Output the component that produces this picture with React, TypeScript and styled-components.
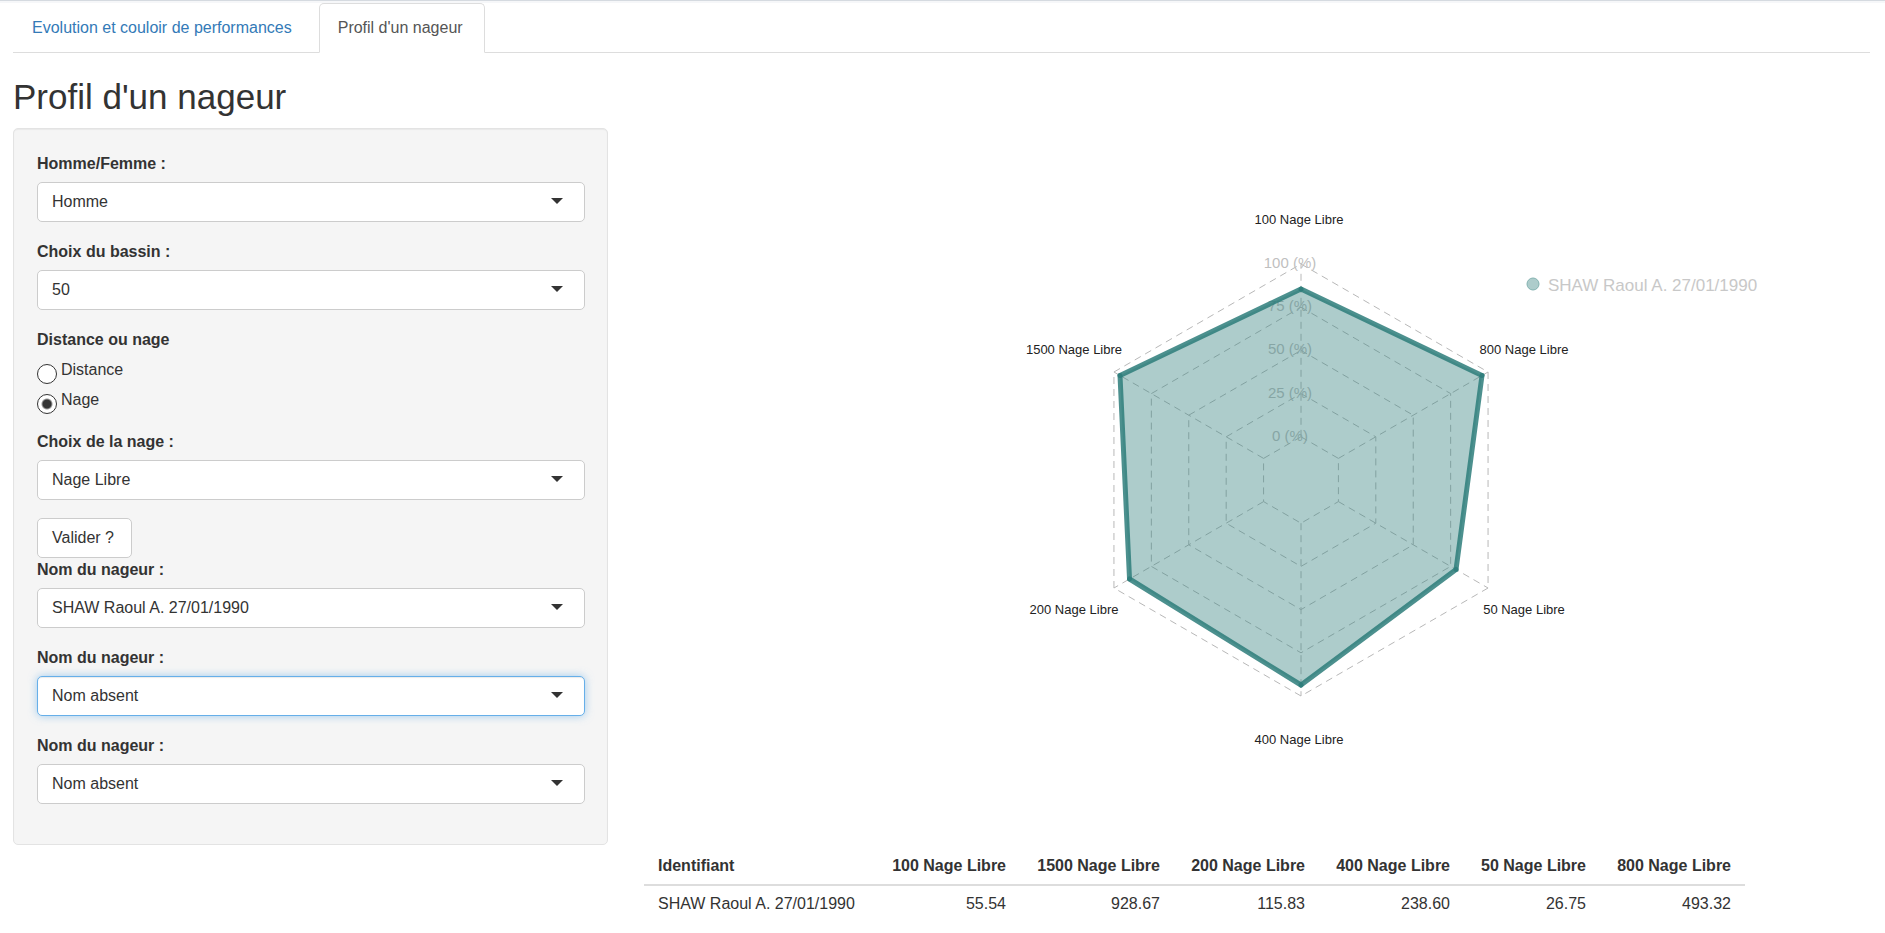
import React, { useState } from 'react';
import styled, { createGlobalStyle, css } from 'styled-components';

const GlobalStyle = createGlobalStyle`
  *, *::before, *::after { box-sizing: border-box; }
  body {
    margin: 0;
    background: #fff;
    color: #333;
    font-family: "Liberation Sans", Arial, Helvetica, sans-serif;
    font-size: 16px;
    line-height: 24px;
  }
`;

const Page = styled.div`
  border-top: 1px solid #d5dae0;
  box-shadow: inset 0 2px #f6f7f9;
  padding: 2px 15px 16px 13px;
`;

const Tabs = styled.nav`
  display: flex;
  gap: 5px;
  border-bottom: 1px solid #ddd;
`;

const Tab = styled.a<{ $active?: boolean }>`
  margin-bottom: -1px;
  padding: 12px 21px 12px 18px;
  border: 1px solid transparent;
  border-radius: 5px 5px 0 0;
  color: #337ab7;
  text-decoration: none;
  ${({ $active }) =>
    $active &&
    css`
      background: #fff;
      border-color: #ddd #ddd #fff;
      color: #555;
    `}
`;

const Title = styled.h2`
  margin: 24px 0 11px;
  font-size: 35px;
  line-height: 40px;
  font-weight: 500;
`;

const Columns = styled.div`
  display: grid;
  grid-template-columns: repeat(12, minmax(0, 1fr));
  column-gap: 36px;
  align-items: start;
`;

const Well = styled.form`
  grid-column: span 4;
  padding: 23px 22px 22px 23px;
  background: #f5f5f5;
  border: 1px solid #e3e3e3;
  border-radius: 5px;
  box-shadow: inset 0 1px 1px rgba(0, 0, 0, 0.05);
`;

const Results = styled.main`
  grid-column: span 8;
`;

const Group = styled.div`
  margin-bottom: 18px;
`;

const Label = styled.label`
  display: block;
  margin-bottom: 6px;
  font-weight: 700;
`;

const SelectBox = styled.div`
  position: relative;
  &::after {
    content: '';
    position: absolute;
    top: 16px;
    right: 22px;
    border: 6px solid transparent;
    border-top-color: #333;
    border-bottom-width: 0;
    pointer-events: none;
  }
`;

const Select = styled.select<{ $focused?: boolean }>`
  appearance: none;
  display: block;
  width: 100%;
  height: 40px;
  padding: 0 40px 0 14px;
  border: 1px solid #ccc;
  border-radius: 5px;
  background: #fff;
  color: #333;
  font: inherit;
  outline: none;
  ${({ $focused }) =>
    $focused &&
    css`
      border-color: #66afe9;
      box-shadow: inset 0 1px 1px rgba(0, 0, 0, 0.08), 0 0 8px rgba(102, 175, 233, 0.6);
    `}
`;

const RadioGroup = styled.fieldset`
  display: flex;
  flex-direction: column;
  gap: 6px;
  margin: 0 0 18px;
  padding: 0;
  border: 0;
`;

const Legend = styled.legend`
  padding: 0 0 6px;
  font-weight: 700;
`;

const RadioLabel = styled.label`
  display: flex;
  gap: 4px;
  height: 24px;
`;

const Radio = styled.input`
  appearance: none;
  flex: none;
  width: 20px;
  height: 20px;
  margin: 6px 0 0;
  border: 1px solid #333;
  border-radius: 50%;
  background: #fff;
  &:checked {
    background: radial-gradient(circle, #333 4px, #fff 6px);
  }
`;

const Button = styled.button`
  display: block;
  min-width: 95px;
  height: 40px;
  padding: 0 14px;
  border: 1px solid #ccc;
  border-radius: 5px;
  background: #fff;
  color: #333;
  font: inherit;
  text-align: left;
`;

const Chart = styled.svg`
  display: block;
  width: 100%;
  height: auto;
`;

const AxisText = styled.text`
  fill: #222;
  font-size: 13px;
  text-anchor: middle;
`;

const TickText = styled.text`
  fill: #bfbfbf;
  font-size: 15px;
  text-anchor: middle;
`;

const LegendText = styled.text`
  fill: #c8c8c8;
  font-size: 17px;
`;

const Table = styled.table`
  table-layout: fixed;
  width: 1101px;
  max-width: 100%;
  border-collapse: collapse;
`;

const Head = styled.th<{ $width: number }>`
  width: ${({ $width }) => $width}px;
  padding: 13px 14px 6px;
  border-bottom: 2px solid #ddd;
  text-align: right;
  white-space: nowrap;
  &:first-child { text-align: left; }
`;

const Cell = styled.td`
  padding: 6px 14px 8px;
  text-align: right;
  white-space: nowrap;
  &:first-child { text-align: left; }
`;

const SWIMMER = 'SHAW Raoul A. 27/01/1990';

const columns = [
  { name: 'Identifiant', value: SWIMMER, width: 231 },
  { name: '100 Nage Libre', value: '55.54', width: 145 },
  { name: '1500 Nage Libre', value: '928.67', width: 154 },
  { name: '200 Nage Libre', value: '115.83', width: 145 },
  { name: '400 Nage Libre', value: '238.60', width: 145 },
  { name: '50 Nage Libre', value: '26.75', width: 136 },
  { name: '800 Nage Libre', value: '493.32', width: 145 },
];

const CX = 657;
const CY = 352;
const STEP = 43.2;

/* Axes run clockwise from the top; radius is the drawn score on each one. */
const axes = [
  { name: '100 Nage Libre', radius: 191, x: 655, y: 96 },
  { name: '800 Nage Libre', radius: 209, x: 880, y: 226 },
  { name: '50 Nage Libre', radius: 179, x: 880, y: 486 },
  { name: '400 Nage Libre', radius: 205, x: 655, y: 616 },
  { name: '200 Nage Libre', radius: 198, x: 430, y: 486 },
  { name: '1500 Nage Libre', radius: 209, x: 430, y: 226 },
];

const point = (axis: number, radius: number): [number, number] => {
  const angle = (axis * Math.PI) / 3;
  return [CX + radius * Math.sin(angle), CY - radius * Math.cos(angle)];
};

const shape = axes.map((axis, i) => point(i, axis.radius));

function RadarChart() {
  return (
    <Chart viewBox="0 0 1226 713" role="img" aria-label="Profil du nageur">
      <g fill="none" stroke="#b8b8b8" strokeWidth="1" strokeDasharray="7 5">
        {[1, 2, 3, 4, 5].map((level) => (
          <polygon key={level} points={axes.map((_, i) => point(i, level * STEP).join(',')).join(' ')} />
        ))}
        {axes.map((axis, i) => {
          const [x1, y1] = point(i, STEP);
          const [x2, y2] = point(i, STEP * 5);
          return <line key={axis.name} x1={x1} y1={y1} x2={x2} y2={y2} />;
        })}
      </g>
      {[100, 75, 50, 25, 0].map((tick, i) => (
        <TickText key={tick} x={646} y={140 + Math.round(i * STEP)}>{`${tick} (%)`}</TickText>
      ))}
      <polygon points={shape.map((p) => p.join(',')).join(' ')} fill="rgb(50,128,125)" fillOpacity="0.4" />
      <g stroke="rgb(45,125,122)" strokeOpacity="0.85" strokeWidth="5" strokeLinecap="round">
        {shape.map(([x, y], i) => {
          const [x2, y2] = shape[(i + 1) % shape.length];
          return <line key={i} x1={x} y1={y} x2={x2} y2={y2} />;
        })}
      </g>
      {axes.map((axis) => (
        <AxisText key={axis.name} x={axis.x} y={axis.y}>{axis.name}</AxisText>
      ))}
      <circle cx="889" cy="156" r="6" fill="#adcccb" stroke="#84b3b1" />
      <LegendText x="904" y="163">{SWIMMER}</LegendText>
    </Chart>
  );
}

type FieldProps = { id: string; label: string; options: string[]; initial: string; focused?: boolean };

function SelectField({ id, label, options, initial, focused }: FieldProps) {
  return (
    <Group>
      <Label htmlFor={id}>{label}</Label>
      <SelectBox>
        <Select id={id} defaultValue={initial} $focused={focused}>
          {options.map((option) => (
            <option key={option}>{option}</option>
          ))}
        </Select>
      </SelectBox>
    </Group>
  );
}

export default function App() {
  const [mode, setMode] = useState('Nage');
  const swimmers = ['Nom absent', SWIMMER];
  return (
    <>
      <GlobalStyle />
      <Page>
        <Tabs>
          <Tab href="#evolution">Evolution et couloir de performances</Tab>
          <Tab href="#profil" $active aria-current="page">Profil d'un nageur</Tab>
        </Tabs>
        <Title>Profil d'un nageur</Title>
        <Columns>
          <Well onSubmit={(event) => event.preventDefault()}>
            <SelectField id="sexe" label="Homme/Femme :" options={['Homme', 'Femme']} initial="Homme" />
            <SelectField id="bassin" label="Choix du bassin :" options={['25', '50']} initial="50" />
            <RadioGroup>
              <Legend>Distance ou nage</Legend>
              {['Distance', 'Nage'].map((option) => (
                <RadioLabel key={option}>
                  <Radio type="radio" name="mode" checked={mode === option} onChange={() => setMode(option)} />
                  {option}
                </RadioLabel>
              ))}
            </RadioGroup>
            <SelectField id="nage" label="Choix de la nage :" options={['Nage Libre']} initial="Nage Libre" />
            <Button type="submit">Valider ?</Button>
            <SelectField id="nageur1" label="Nom du nageur :" options={swimmers} initial={SWIMMER} />
            <SelectField id="nageur2" label="Nom du nageur :" options={swimmers} initial="Nom absent" focused />
            <SelectField id="nageur3" label="Nom du nageur :" options={swimmers} initial="Nom absent" />
          </Well>
          <Results>
            <RadarChart />
            <Table>
              <thead>
                <tr>
                  {columns.map((column) => (
                    <Head key={column.name} scope="col" $width={column.width}>{column.name}</Head>
                  ))}
                </tr>
              </thead>
              <tbody>
                <tr>
                  {columns.map((column) => (
                    <Cell key={column.name}>{column.value}</Cell>
                  ))}
                </tr>
              </tbody>
            </Table>
          </Results>
        </Columns>
      </Page>
    </>
  );
}
